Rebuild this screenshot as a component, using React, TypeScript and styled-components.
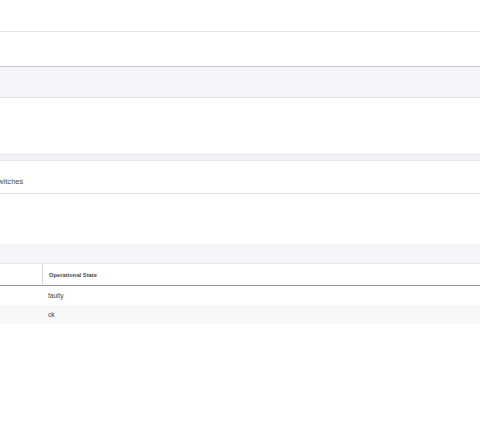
import styled, { createGlobalStyle } from "styled-components";

const GlobalStyle = createGlobalStyle`
  html, body {
    margin: 0;
    padding: 0;
    background: #ffffff;
    font-family: "Liberation Sans", Arial, sans-serif;
    overflow: hidden;
  }
`;

const Page = styled.main`
  width: 480px;
  display: flex;
  flex-direction: column;
`;

const TopBar = styled.header`
  height: 31px;
  border-bottom: 1px solid #e2e2e4;
`;

const Spacer = styled.div<{ h: number }>`
  height: ${(p) => p.h}px;
`;

const Band = styled.div<{ h: number; bg: string; top?: string; bottom?: string }>`
  height: ${(p) => p.h}px;
  background: ${(p) => p.bg};
  border-top: ${(p) => (p.top ? `1px solid ${p.top}` : "none")};
  border-bottom: ${(p) => (p.bottom ? `1px solid ${p.bottom}` : "none")};
`;

const SectionHeader = styled.div`
  height: 32px;
  display: flex;
  align-items: center;
  border-bottom: 1px solid #e2e2e4;
`;

const Title = styled.h2`
  margin: 0 0 0 -7px;
  font-size: 7.6px;
  font-weight: 400;
  color: #4a4a4a;
  padding-top: 8px;
`;

const Table = styled.div`
  display: flex;
  flex-direction: column;
`;

const HeadRow = styled.div`
  display: grid;
  grid-template-columns: 43px 1fr;
  height: 21px;
  border-bottom: 1px solid #9a9a9a;
`;

const HeadCell = styled.div<{ sep?: boolean }>`
  display: flex;
  align-items: center;
  padding-left: 6px;
  font-size: 5.8px;
  font-weight: 700;
  color: #4a4a4a;
  border-right: ${(p) => (p.sep ? "1px solid #dcdcdc" : "none")};
`;

const Row = styled.div<{ striped?: boolean }>`
  display: grid;
  grid-template-columns: 43px 1fr;
  height: 19px;
  background: ${(p) => (p.striped ? "#f8f8f8" : "#ffffff")};
`;

const Cell = styled.div`
  display: flex;
  align-items: center;
  padding-left: 5px;
  font-size: 6.5px;
  color: #444;
`;

const rows = [{ state: "faulty" }, { state: "ok" }];

export default function App() {
  return (
    <>
      <GlobalStyle />
      <Page>
        <TopBar />
        <Spacer h={34} />
        <Band h={30} bg="#f4f5f8" top="#c6c6c8" bottom="#e4e4e6" />
        <Spacer h={56} />
        <Band h={5} bg="#f0f1f4" top="#e6e6e8" bottom="#e8e8ea" />
        <SectionHeader>
          <Title>Switches</Title>
        </SectionHeader>
        <Spacer h={50} />
        <Band h={19} bg="#f4f5f8" bottom="#e6e6e8" />
        <Table>
          <HeadRow>
            <HeadCell sep />
            <HeadCell>Operational State</HeadCell>
          </HeadRow>
          {rows.map((r, i) => (
            <Row key={i} striped={i % 2 === 1}>
              <Cell />
              <Cell>{r.state}</Cell>
            </Row>
          ))}
        </Table>
      </Page>
    </>
  );
}
